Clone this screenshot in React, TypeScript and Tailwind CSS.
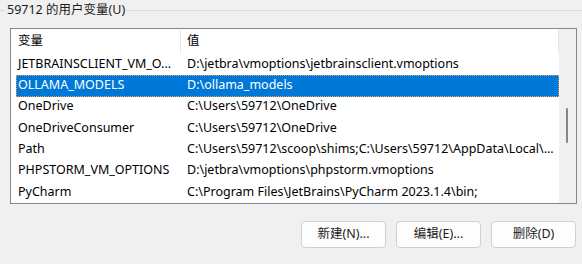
const rows: [string, string][] = [
  ["JETBRAINSCLIENT_VM_O...", "D:\\jetbra\\vmoptions\\jetbrainsclient.vmoptions"],
  ["OLLAMA_MODELS", "D:\\ollama_models"],
  ["OneDrive", "C:\\Users\\59712\\OneDrive"],
  ["OneDriveConsumer", "C:\\Users\\59712\\OneDrive"],
  ["Path", "C:\\Users\\59712\\scoop\\shims;C:\\Users\\59712\\AppData\\Local\\..."],
  ["PHPSTORM_VM_OPTIONS", "D:\\jetbra\\vmoptions\\phpstorm.vmoptions"],
  ["PyCharm", "C:\\Program Files\\JetBrains\\PyCharm 2023.1.4\\bin;"],
];

const SELECTED = 1;

function Button({ label }: { label: string }) {
  return (
    <button className="w-[85px] h-[27px] rounded-[4px] border border-[#d0d0d0] bg-[#fdfdfd] text-[12.5px] text-[#1a1a1a] flex items-center justify-center">
      {label}
    </button>
  );
}

export default function App() {
  return (
    <div
      className="w-[582px] h-[264px] bg-[#f0f0f0] overflow-hidden text-[12.5px] text-black"
      style={{ fontFamily: '"Noto Sans", "Noto Sans CJK SC", sans-serif' }}
    >
      {/* group box caption */}
      <div className="flex items-center h-[20px] pt-[1px]">
        <div className="w-[5px] h-px bg-[#dcdcdc]" />
        <span className="px-[2px] text-[#1b1b1b] leading-none">59712 的用户变量(U)</span>
        <div className="flex-1 h-px bg-[#dcdcdc]" />
      </div>

      {/* list view */}
      <div className="ml-[10px] mt-[8px] w-[567px] h-[176px] border border-[#828790] bg-white flex overflow-hidden">
        <div className="flex-1 pl-[5px]">
          <div className="h-[25px] flex items-center">
            <div className="w-[164px] pl-[2px] h-full flex items-center">变量</div>
            <div className="w-px h-[23px] bg-[#e5e5e5]" />
            <div className="flex-1 pl-[6px] h-full flex items-center">值</div>
            <div className="w-px h-[23px] bg-[#e5e5e5]" />
          </div>
          {rows.map(([name, value], i) => (
            <div
              key={name}
              className={
                i === SELECTED
                  ? "h-[21.33px] flex items-center bg-[#0078d7] text-white outline outline-1 outline-dotted outline-[#e8a050] -outline-offset-1"
                  : "h-[21.33px] flex items-center"
              }
            >
              <div className="w-[165px] pl-[2px] whitespace-nowrap overflow-hidden pb-[1px]">{name}</div>
              <div className="flex-1 pl-[6px] whitespace-nowrap overflow-hidden pb-[1px]">{value}</div>
            </div>
          ))}
        </div>
        <div className="w-[17px] bg-[#f0f0f0] flex flex-col">
          <div className="w-[2px] h-[35px] bg-[#858585] rounded-full ml-[7px] mt-[79px]" />
        </div>
      </div>

      {/* buttons */}
      <div className="flex justify-end gap-[10px] pr-[6px] mt-[17px]">
        <Button label="新建(N)..." />
        <Button label="编辑(E)..." />
        <Button label="删除(D)" />
      </div>
    </div>
  );
}
